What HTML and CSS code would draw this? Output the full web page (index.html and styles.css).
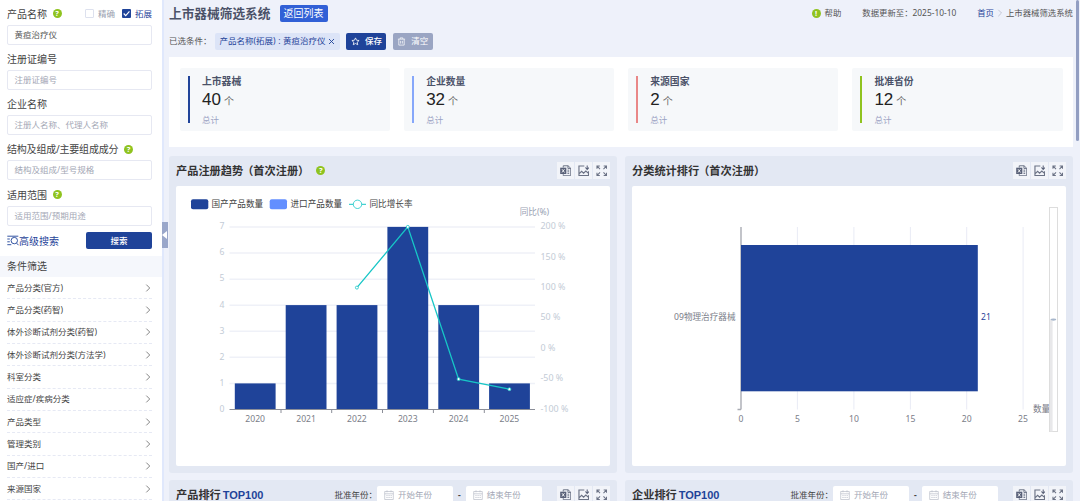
FILE: index.html
```html
<!DOCTYPE html>
<html>
	<head>
		<meta charset="utf-8">
		<title>上市器械筛选系统</title>
		<link rel="stylesheet" href="styles.css">
	</head>

	<body>

		<svg class="defs">
			<symbol id="excel" viewBox="0 0 12 12">
				<path d="M3.4 2.6V.8h5l2.8 2.6v7.8H3.4V9.6M8.3.8v2.8h3M7.8 5.4h1.8M7.8 7.1h1.8M7.8 8.8h1.8" fill="none" stroke="#6b7285" stroke-width="1"/>
				<rect x=".2" y="2.8" width="6.4" height="6.6" fill="#596178"/>
				<path d="M2.1 4.4l2.6 3.4M4.7 4.4L2.1 7.8" stroke="#fff" stroke-width=".9"/>
			</symbol>
			<symbol id="image" viewBox="0 0 12 12">
				<path d="M6.6 1H1v10h10V6.6M1 9.2l2.8-2.6 2 1.9 2.4-2.2L11 8.8" fill="none" stroke="#6b7285" stroke-width="1.2"/>
				<path d="M9.6.4v4M7.7 2.6l1.9 2 1.9-2" fill="none" stroke="#596178" stroke-width="1.1"/>
			</symbol>
			<symbol id="full" viewBox="0 0 12 12">
				<path d="M1 4V1h3M8 1h3v3M11 8v3H8M4 11H1V8M1.2 1.2l3 3M10.8 1.2l-3 3M10.8 10.8l-3-3M1.2 10.8l3-3" fill="none" stroke="#6b7285" stroke-width="1.1"/>
			</symbol>
			<symbol id="cal" viewBox="0 0 10 10">
				<path d="M.7 1.5h8.6v8H.7zM.7 3.8h8.6M3 .3v2M7 .3v2M2.3 5.6h1.4M4.4 5.6h1.4M6.5 5.6h1.4M2.3 7.5h1.4M4.4 7.5h1.4M6.5 7.5h1.4" fill="none" stroke="#b9bdc9" stroke-width=".7"/>
			</symbol>
			<symbol id="arrow" viewBox="0 0 6 8">
				<path d="M1.3.6L4.7 4 1.3 7.4" fill="none" stroke="#666" stroke-width=".8"/>
			</symbol>
		</svg>

		<div class="page">
			<aside class="side">
				<div class="field">
					<div class="label">产品名称<i class="tip">?</i>
						<span class="checks"><b class="box"></b><span class="off">精确</span><b class="box on"><svg viewBox="0 0 8 8"><path d="M1.5 4l1.8 1.9L6.6 2.2" fill="none" stroke="#fff" stroke-width="1"/></svg></b><span>拓展</span></span>
					</div>
					<div class="input filled">黄疸治疗仪</div>
				</div>
				<div class="field">
					<div class="label">注册证编号</div>
					<div class="input">注册证编号</div>
				</div>
				<div class="field">
					<div class="label">企业名称</div>
					<div class="input">注册人名称、代理人名称</div>
				</div>
				<div class="field">
					<div class="label long">结构及组成/主要组成成分<i class="tip">?</i></div>
					<div class="input">结构及组成/型号规格</div>
				</div>
				<div class="field">
					<div class="label">适用范围<i class="tip">?</i></div>
					<div class="input">适用范围/预期用途</div>
				</div>
				<div class="actions">
					<span class="advanced">
						<svg viewBox="0 0 12 11"><path d="M.3 1.2h11M.3 4h2.5M.3 6.8h2.5M.3 9.7h4M9.7 8.2l1.8 2" fill="none" stroke="#1f4399" stroke-width=".9"/><circle cx="7.3" cy="5.6" r="3.2" fill="none" stroke="#1f4399" stroke-width=".9"/></svg>高级搜索
					</span>
					<span class="search">搜索</span>
				</div>
				<div class="side-title">条件筛选</div>
				<div class="filters">
					<div>产品分类(官方)<svg><use href="#arrow"/></svg></div>
					<div>产品分类(药智)<svg><use href="#arrow"/></svg></div>
					<div>体外诊断试剂分类(药智)<svg><use href="#arrow"/></svg></div>
					<div>体外诊断试剂分类(方法学)<svg><use href="#arrow"/></svg></div>
					<div>科室分类<svg><use href="#arrow"/></svg></div>
					<div>适应症/疾病分类<svg><use href="#arrow"/></svg></div>
					<div>产品类型<svg><use href="#arrow"/></svg></div>
					<div>管理类别<svg><use href="#arrow"/></svg></div>
					<div>国产/进口<svg><use href="#arrow"/></svg></div>
					<div>来源国家<svg><use href="#arrow"/></svg></div>
				</div>
			</aside>

			<main class="main">
				<header class="top">
					<h1>上市器械筛选系统</h1>
					<span class="back">返回列表</span>
					<div class="info">
						<i class="tip">!</i><span class="help">帮助</span>
						<span class="date">数据更新至：2025-10-10</span>
						<span class="home">首页</span>
						<svg viewBox="0 0 6 8"><path d="M1.3.8L4.5 4 1.3 7.2" fill="none" stroke="#b8bccb" stroke-width=".8"/></svg>
						<span>上市器械筛选系统</span>
					</div>
				</header>

				<div class="chosen">
					<span class="chosen-label">已选条件：</span>
					<span class="tag">产品名称(拓展) : 黄疸治疗仪<svg viewBox="0 0 7 7"><path d="M1 1l5 5M6 1L1 6" stroke="#1f4399" stroke-width=".9"/></svg></span>
					<span class="btn save"><svg viewBox="0 0 10 10"><path d="M5 1l1.2 2.6 2.8.3-2.1 1.9.6 2.8L5 7.2 2.5 8.6l.6-2.8L1 3.9l2.8-.3z" fill="none" stroke="#fff" stroke-width=".9"/></svg>保存</span>
					<span class="btn clear"><svg viewBox="0 0 10 10"><path d="M1 2.4h8M3.5 2.2V1h3v1.2M2 2.6V9h6V2.6M4 4.3v3M6 4.3v3" fill="none" stroke="#fff" stroke-width=".8"/></svg>清空</span>
				</div>

				<section class="stats">
					<div class="stat navy"><h3>上市器械</h3><p><strong>40</strong>个</p><small>总计</small></div>
					<div class="stat blue"><h3>企业数量</h3><p><strong>32</strong>个</p><small>总计</small></div>
					<div class="stat red"><h3>来源国家</h3><p><strong>2</strong>个</p><small>总计</small></div>
					<div class="stat green"><h3>批准省份</h3><p><strong>12</strong>个</p><small>总计</small></div>
				</section>

				<div class="panels">
					<section class="panel">
						<div class="head">
							<h2>产品注册趋势<span class="paren">（首次注册）</span></h2><i class="tip">?</i>
							<div class="tools"><span><svg><use href="#excel"/></svg></span><span><svg><use href="#image"/></svg></span><span><svg><use href="#full"/></svg></span></div>
						</div>
						<svg class="chart" viewBox="0 0 434 280">
							<g class="legend">
								<rect x="15" y="13.2" width="17.3" height="10" rx="2" fill="#1f4399"/>
								<text x="35.5" y="20.6">国产产品数量</text>
								<rect x="93.7" y="13.2" width="17.3" height="10" rx="2" fill="#638fff"/>
								<text x="114.5" y="20.6">进口产品数量</text>
								<path d="M173 18.3h17" stroke="#17c6c6" stroke-width="1"/>
								<circle cx="181.5" cy="18.3" r="4.2" fill="#fff" stroke="#17c6c6" stroke-width=".8"/>
								<text x="193.5" y="20.6">同比增长率</text>
							</g>
							<path class="grid" d="M53.5 41h305.5M53.5 67.1h305.5M53.5 93.2h305.5M53.5 119.2h305.5M53.5 145.2h305.5M53.5 171.3h305.5M53.5 197.4h305.5"/>
							<g class="axis-pale" text-anchor="end">
								<text x="48.3" y="43.2">7</text>
								<text x="48.3" y="69.3">6</text>
								<text x="48.3" y="95.4">5</text>
								<text x="48.3" y="121.5">4</text>
								<text x="48.3" y="147.6">3</text>
								<text x="48.3" y="173.7">2</text>
								<text x="48.3" y="199.7">1</text>
								<text x="48.3" y="225.8">0</text>
							</g>
							<g class="axis-pale percent">
								<text x="364.5" y="43.2">200 %</text>
								<text x="364.5" y="73.6">150 %</text>
								<text x="364.5" y="104">100 %</text>
								<text x="364.5" y="134.4">50 %</text>
								<text x="364.5" y="164.9">0 %</text>
								<text x="364.5" y="195.3">-50 %</text>
								<text x="364.5" y="225.7">-100 %</text>
							</g>
							<text class="axis-name" x="343.7" y="28.6">同比(%)</text>
							<g fill="#1f4399">
								<rect x="58.8" y="197.4" width="40.8" height="26"/>
								<rect x="109.7" y="119.1" width="40.8" height="104.3"/>
								<rect x="160.6" y="119.1" width="40.8" height="104.3"/>
								<rect x="211.4" y="40.9" width="40.8" height="182.5"/>
								<rect x="262.3" y="119.1" width="40.8" height="104.3"/>
								<rect x="313.1" y="197.4" width="40.8" height="26"/>
							</g>
							<path class="axis" d="M53.5 223.5h305.5M105 223.5v3.5M155.7 223.5v3.5M206.5 223.5v3.5M257.4 223.5v3.5M308.3 223.5v3.5"/>
							<g class="axis-text" text-anchor="middle">
								<text x="79.2" y="235.6">2020</text>
								<text x="130.1" y="235.6">2021</text>
								<text x="180.9" y="235.6">2022</text>
								<text x="231.8" y="235.6">2023</text>
								<text x="282.6" y="235.6">2024</text>
								<text x="333.4" y="235.6">2025</text>
							</g>
							<polyline points="180.9,101.6 231.8,40.9 282.6,193.1 333.4,203.2" fill="none" stroke="#17c6c6" stroke-width="1.3"/>
							<g fill="#fff" stroke="#17c6c6" stroke-width=".8">
								<circle cx="180.9" cy="101.6" r="1.5"/>
								<circle cx="231.8" cy="40.9" r="1.5"/>
								<circle cx="282.6" cy="193.1" r="1.5"/>
								<circle cx="333.4" cy="203.2" r="1.5"/>
							</g>
						</svg>
					</section>

					<section class="panel">
						<div class="head">
							<h2>分类统计排行<span class="paren">（首次注册）</span></h2>
							<div class="tools"><span><svg><use href="#excel"/></svg></span><span><svg><use href="#image"/></svg></span><span><svg><use href="#full"/></svg></span></div>
						</div>
						<svg class="chart" viewBox="0 0 434 280">
							<path class="grid thin" d="M165.4 41v182.5M221.9 41v182.5M278.4 41v182.5M334.7 41v182.5M391.1 41v182.5"/>
							<path class="axis side-axis" d="M109 41v182.5M105.5 223.5h3.5"/>
							<rect x="109" y="59" width="236.8" height="146.3" fill="#1f4399"/>
							<g class="axis-text">
								<text x="103.5" y="134.3" text-anchor="end">09物理治疗器械</text>
								<text x="401" y="225.8">数量</text>
							</g>
							<text class="value" x="349" y="134.3">21</text>
							<g class="axis-text" text-anchor="middle">
								<text x="109" y="235.6">0</text>
								<text x="165.4" y="235.6">5</text>
								<text x="221.9" y="235.6">10</text>
								<text x="278.4" y="235.6">15</text>
								<text x="334.7" y="235.6">20</text>
								<text x="391" y="235.6">25</text>
							</g>
							<rect x="417.5" y="21.5" width="8" height="224" fill="#fff" fill-opacity=".5" stroke="#ddd"/>
							<rect x="418" y="133" width="2.6" height="112.5" fill="#e8e8ea"/>
							<ellipse cx="421.5" cy="133.6" rx="2.8" ry="1.1" fill="#a7b7cc"/>
						</svg>
					</section>

					<section class="panel">
						<div class="head">
							<h2>产品排行 <em>TOP100</em></h2>
							<div class="years">批准年份：<span class="year"><svg><use href="#cal"/></svg>开始年份</span><b>-</b><span class="year"><svg><use href="#cal"/></svg>结束年份</span></div>
							<div class="tools"><span><svg><use href="#excel"/></svg></span><span><svg><use href="#image"/></svg></span><span><svg><use href="#full"/></svg></span></div>
						</div>
					</section>

					<section class="panel">
						<div class="head">
							<h2>企业排行 <em>TOP100</em></h2>
							<div class="years">批准年份：<span class="year"><svg><use href="#cal"/></svg>开始年份</span><b>-</b><span class="year"><svg><use href="#cal"/></svg>结束年份</span></div>
							<div class="tools"><span><svg><use href="#excel"/></svg></span><span><svg><use href="#image"/></svg></span><span><svg><use href="#full"/></svg></span></div>
						</div>
					</section>
				</div>
			</main>

			<div class="fold"></div>
			<div class="scroll"></div>
		</div>

	</body>
</html>
```

FILE: styles.css
```css
*{
	box-sizing: border-box;
}
body{
	margin: 0;
	height: 501px;
	overflow: hidden;
	background-color: #eef1fa;
	font-family: "Noto Sans", "Noto Sans CJK SC", sans-serif;
	font-size: 8.5px;
	line-height: 12px;
	color: #555;
}
h1, h2, h3, p{
	margin: 0;
}
i, em{
	font-style: normal;
}
svg{
	display: block;
	flex: none;
}
.defs{
	position: absolute;
	width: 0;
	height: 0;
}
.page{
	position: relative;
	display: flex;
	height: 501px;
	overflow: hidden;
}
.tip{
	flex: none;
	width: 9px;
	height: 9px;
	border-radius: 50%;
	background-color: #8fc31f;
	color: white;
	font-size: 7.5px;
	line-height: 9px;
	font-weight: bold;
	text-align: center;
}

/* sidebar */
.side{
	flex: none;
	width: 164px;
	border-right: 2px solid #e0e8fc;
	background-color: white;
	padding-top: 2.5px;
}
.field{
	height: 45.3px;
	padding: 0 10px 0 7px;
}
.label{
	display: flex;
	align-items: center;
	height: 22px;
	font-size: 10px;
	color: #444;
}
.label .tip{
	margin-left: 5.5px;
}
.label.long{
	letter-spacing: -0.2px;
}
.checks{
	display: flex;
	align-items: center;
	margin-left: auto;
	font-size: 8.5px;
	color: #1f4399;
}
.checks .off{
	color: #9b9fb0;
	margin-right: 7px;
}
.box{
	width: 9px;
	height: 9px;
	margin-right: 4px;
	border: 1px solid #dde1ee;
	border-radius: 1px;
}
.box.on{
	border: 0;
	background-color: #1f4399;
}
.input{
	width: 145px;
	height: 20px;
	padding-left: 6.5px;
	border: 1px solid #e6e8f2;
	border-radius: 2px;
	line-height: 18px;
	color: #a3a7b5;
}
.input.filled{
	color: #555;
}
.actions{
	display: flex;
	align-items: center;
	justify-content: space-between;
	height: 27px;
	padding: 0 10px 3px 7px;
}
.advanced{
	display: flex;
	align-items: center;
	font-size: 10px;
	color: #1f4399;
}
.advanced svg{
	width: 12px;
	height: 11px;
}
.search{
	width: 66px;
	height: 17px;
	border-radius: 2px;
	background-color: #1f4399;
	color: white;
	font-weight: 500;
	line-height: 17px;
	text-align: center;
}
.side-title{
	height: 21px;
	padding-left: 7px;
	background-color: #f5f7fc;
	font-size: 10px;
	line-height: 20px;
	color: #444;
}
.filters{
	padding: 0 10px 0 7px;
}
.filters div{
	display: flex;
	align-items: center;
	justify-content: space-between;
	height: 22.35px;
	border-bottom: 1px dashed #e6e9f4;
	color: #444;
}
.filters svg{
	width: 6px;
	height: 8px;
	margin-right: 1.5px;
}

/* content */
.main{
	flex: none;
	width: 909px;
	padding-left: 5px;
}
.top{
	display: flex;
	align-items: center;
	height: 26px;
}
.top h1{
	font-size: 12.7px;
	color: #4b5268;
}
.back{
	width: 48px;
	height: 17px;
	margin-left: 9px;
	border-radius: 2px;
	background-color: #3160d6;
	font-size: 10px;
	line-height: 16px;
	color: white;
	text-align: center;
}
.info{
	display: flex;
	align-items: center;
	margin-left: auto;
	font-size: 8.4px;
}
.help{
	margin: 0 21px 0 4px;
}
.date{
	margin-right: 21px;
}
.home{
	color: #1f4399;
}
.info svg{
	width: 6px;
	height: 8px;
	margin: 0 3px;
}
.chosen{
	display: flex;
	align-items: center;
	height: 31px;
	padding-bottom: 1px;
}
.chosen-label{
	width: 46px;
}
.tag{
	display: flex;
	align-items: center;
	width: 125px;
	height: 17px;
	padding-left: 4.5px;
	border-radius: 2px;
	background-color: #dce4f7;
	color: #1f4399;
	white-space: nowrap;
	word-spacing: 0.4px;
}
.tag svg{
	width: 7px;
	height: 7px;
	margin-left: 2.5px;
}
.btn{
	display: flex;
	align-items: center;
	justify-content: center;
	width: 40px;
	height: 17px;
	margin-left: 6.3px;
	border-radius: 2px;
	color: white;
}
.btn svg{
	width: 9px;
	height: 9px;
	margin-right: 5.5px;
}
.save{
	background-color: #1f4399;
	font-weight: 500;
}
.clear{
	background-color: #9aa5c3;
}
.stats{
	display: grid;
	grid-template-columns: repeat(4, 1fr);
	gap: 14px;
	height: 90px;
	padding: 11px 10.5px 16px 11px;
	background-color: white;
}
.stat{
	position: relative;
	padding: 6.5px 0 0 22px;
	border-radius: 2px;
	background-color: #f6f8fa;
}
.stat::before{
	content: "";
	position: absolute;
	left: 8px;
	top: 8px;
	width: 1.6px;
	height: 47px;
	background-color: #1f4399;
}
.stat.blue::before{
	background-color: #86a7fa;
}
.stat.red::before{
	background-color: #e98787;
}
.stat.green::before{
	background-color: #8fc31f;
}
.stat h3{
	font-size: 9.8px;
	line-height: 13px;
	color: #4b5268;
}
.stat p{
	display: flex;
	align-items: baseline;
	height: 24px;
	font-size: 10px;
	line-height: 24px;
	color: #666;
}
.stat strong{
	margin-right: 3px;
	font-family: "Liberation Sans", sans-serif;
	font-size: 17px;
	font-weight: normal;
	color: #222;
}
.stat small{
	display: block;
	font-size: 8.5px;
	line-height: 15px;
	color: #9ca3c4;
}

/* chart panels */
.panels{
	display: grid;
	grid-template-columns: 448px 448px;
	gap: 7px 8px;
	padding-top: 9px;
}
.panel{
	height: 317px;
	padding: 0 7px;
	border-radius: 3px;
	background-color: #e3e8f3;
}
.head{
	display: flex;
	align-items: center;
	height: 29.5px;
}
.head h2{
	font-size: 11.2px;
	color: #333;
	word-spacing: -1px;
}
.paren{
	margin-left: -1px;
}
.head em{
	font-family: "Liberation Sans", sans-serif;
	font-size: 11px;
	color: #1f4399;
}
.head .tip{
	margin-left: 7px;
}
.tools{
	display: flex;
	gap: 1.3px;
	margin-left: auto;
}
.tools span{
	display: flex;
	align-items: center;
	justify-content: center;
	width: 16.8px;
	height: 16.8px;
	background-color: #f2f4f9;
}
.tools svg{
	width: 11.5px;
	height: 11.5px;
}
.years{
	display: flex;
	align-items: center;
	margin-left: auto;
	color: #444;
}
.years b{
	width: 12.3px;
	text-align: center;
}
.year{
	display: flex;
	align-items: center;
	width: 76.4px;
	height: 18px;
	padding-left: 7px;
	border-radius: 2px;
	background-color: white;
	color: #a3a7b5;
}
.year svg{
	width: 10px;
	height: 10px;
	margin-right: 4px;
}
.years + .tools{
	margin-left: 15px;
}
.chart{
	width: 434px;
	height: 280px;
	border-radius: 2px;
	background-color: white;
	font-size: 8.6px;
}
.legend text{
	fill: #444;
}
.grid{
	stroke: #eff1f8;
	stroke-width: 1.5;
}
.grid.thin{
	stroke: #e9ebf5;
	stroke-width: 1;
}
.axis{
	fill: none;
	stroke: #8b8e98;
	stroke-width: 1;
}
.side-axis{
	stroke: #a9abb3;
	stroke-width: 1.4;
}
.axis-pale{
	fill: #c3cbd6;
}
.percent{
	font-size: 8.9px;
}
.axis-name{
	fill: #98a1b3;
}
.axis-text{
	fill: #7a7d88;
}
.value{
	fill: #1f4399;
}

/* things over the page */
.fold{
	position: absolute;
	left: 162px;
	top: 222px;
	width: 6px;
	height: 26px;
	background-color: #9aa7ca;
}
.fold::after{
	content: "";
	position: absolute;
	left: 0;
	top: 9px;
	border: 4px solid transparent;
	border-right: 5px solid white;
	border-left: 0;
}
.scroll{
	position: absolute;
	right: 1px;
	top: 0;
	width: 3px;
	height: 141px;
	border-radius: 2px;
	background-color: #929ec2;
}
```
